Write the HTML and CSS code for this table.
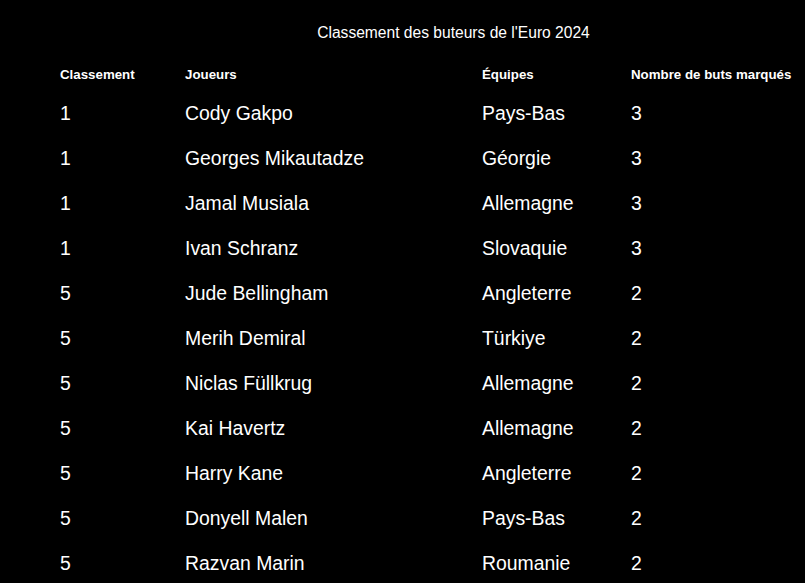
FILE: index.html
```html
<!DOCTYPE html>
<html lang="fr">
<head>
<meta charset="utf-8">
<link rel="stylesheet" href="styles.css">
</head>
<body>
<div class="wrap">
  <div class="title">Classement des buteurs de l'Euro 2024</div>
  <table class="scorers">
    <thead>
      <tr><th class="c1">Classement</th><th class="c2">Joueurs</th><th class="c3">Équipes</th><th class="c4">Nombre de buts marqués</th></tr>
    </thead>
    <tbody>
      <tr><td>1</td><td>Cody Gakpo</td><td>Pays-Bas</td><td>3</td></tr>
      <tr><td>1</td><td>Georges Mikautadze</td><td>Géorgie</td><td>3</td></tr>
      <tr><td>1</td><td>Jamal Musiala</td><td>Allemagne</td><td>3</td></tr>
      <tr><td>1</td><td>Ivan Schranz</td><td>Slovaquie</td><td>3</td></tr>
      <tr><td>5</td><td>Jude Bellingham</td><td>Angleterre</td><td>2</td></tr>
      <tr><td>5</td><td>Merih Demiral</td><td>Türkiye</td><td>2</td></tr>
      <tr><td>5</td><td>Niclas Füllkrug</td><td>Allemagne</td><td>2</td></tr>
      <tr><td>5</td><td>Kai Havertz</td><td>Allemagne</td><td>2</td></tr>
      <tr><td>5</td><td>Harry Kane</td><td>Angleterre</td><td>2</td></tr>
      <tr><td>5</td><td>Donyell Malen</td><td>Pays-Bas</td><td>2</td></tr>
      <tr><td>5</td><td>Razvan Marin</td><td>Roumanie</td><td>2</td></tr>
    </tbody>
  </table>
</div>
</body>
</html>
```
FILE: styles.css
```css
html, body {
  margin: 0;
  padding: 0;
  background: #000;
  color: #fff;
  font-family: "Liberation Sans", Arial, sans-serif;
  overflow: hidden;
}
.wrap {
  padding: 22px 0 0 60px;
}
.title {
  font-size: 15.6px;
  line-height: 22px;
  text-align: center;
  width: 745px;
  padding-left: 42px;
  box-sizing: border-box;
}
.scorers {
  border-collapse: collapse;
  margin-top: 14px;
}
.scorers th {
  font-size: 13.3px;
  font-weight: bold;
  text-align: left;
  height: 33px;
  padding: 0;
  vertical-align: middle;
  white-space: nowrap;
}
.scorers td {
  font-size: 19.4px;
  height: 45px;
  padding: 0;
  vertical-align: middle;
  white-space: nowrap;
}
.c1 { width: 125px; }
.c2 { width: 297px; }
.c3 { width: 149px; }
.c4 { width: 170px; }
```
